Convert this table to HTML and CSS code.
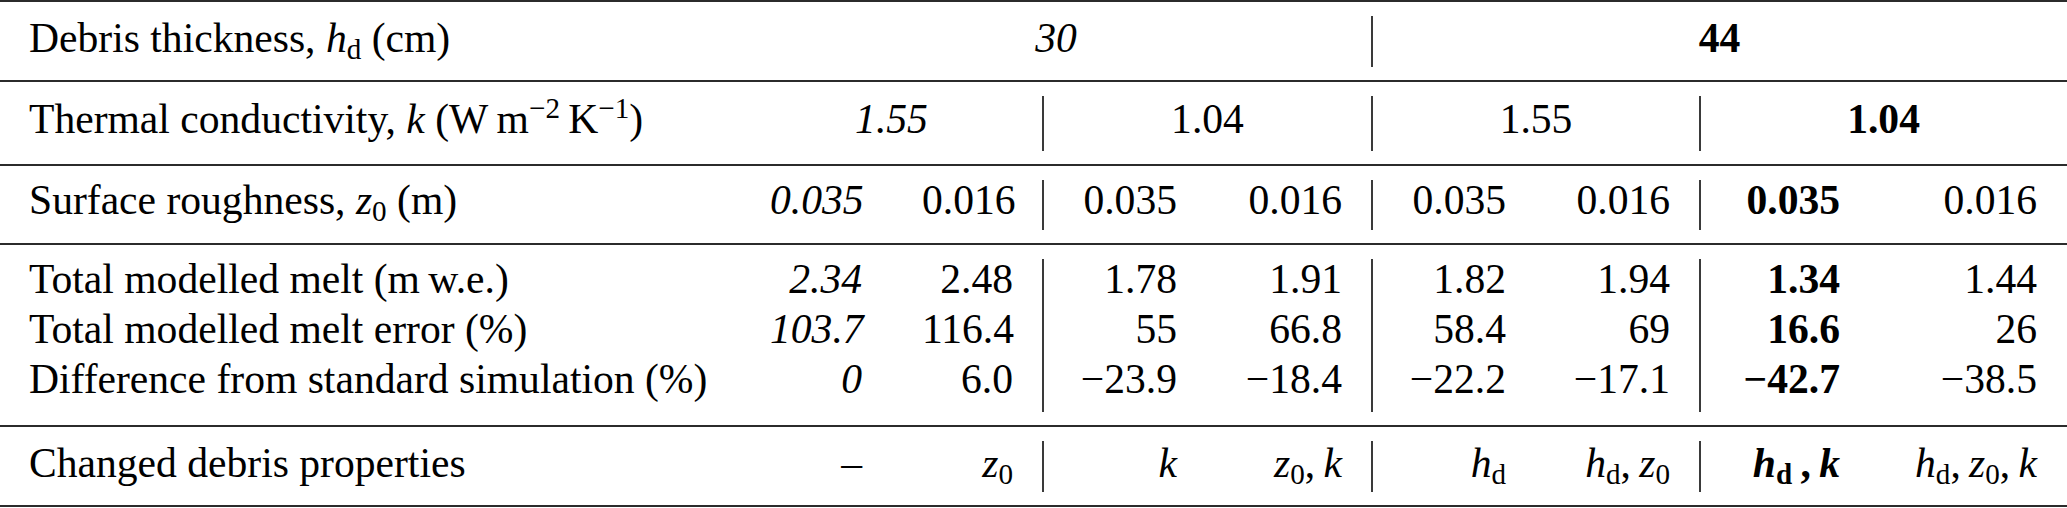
FILE: index.html
```html
<!DOCTYPE html>
<html>
<head>
    <link rel="stylesheet" href="styles.css">
</head>
<body>
    <table class="props">
        <colgroup>
            <col class="c-label">
            <col class="c-1a"><col class="c-1b">
            <col class="c-2a"><col class="c-2b">
            <col class="c-3a"><col class="c-3b">
            <col class="c-4a"><col class="c-4b">
        </colgroup>
        <tr class="ruled r1">
            <td class="lbl">Debris thickness, <i>h</i><sub>d</sub> (cm)</td>
            <td class="mid" colspan="4"><i>30</i></td>
            <td class="mid sep" colspan="4"><b>44</b></td>
        </tr>
        <tr class="ruled r2">
            <td class="lbl">Thermal conductivity, <i>k</i> (W&thinsp;m<sup>&minus;2</sup>&thinsp;K<sup>&minus;1</sup>)</td>
            <td class="mid" colspan="2"><i>1.55</i></td>
            <td class="mid sep" colspan="2">1.04</td>
            <td class="mid sep" colspan="2">1.55</td>
            <td class="mid sep" colspan="2"><b>1.04</b></td>
        </tr>
        <tr class="ruled r3">
            <td class="lbl">Surface roughness, <i>z</i><sub>0</sub> (m)</td>
            <td><i>0.035</i></td>
            <td>0.016</td>
            <td class="sep">0.035</td>
            <td>0.016</td>
            <td class="sep">0.035</td>
            <td>0.016</td>
            <td class="sep"><b>0.035</b></td>
            <td>0.016</td>
        </tr>
        <tr class="ruled g1">
            <td class="lbl">Total modelled melt (m&thinsp;w.e.)</td>
            <td><i>2.34</i></td>
            <td>2.48</td>
            <td class="sep">1.78</td>
            <td>1.91</td>
            <td class="sep">1.82</td>
            <td>1.94</td>
            <td class="sep"><b>1.34</b></td>
            <td>1.44</td>
        </tr>
        <tr class="g2">
            <td class="lbl">Total modelled melt error (%)</td>
            <td><i>103.7</i></td>
            <td>116.4</td>
            <td class="sep">55</td>
            <td>66.8</td>
            <td class="sep">58.4</td>
            <td>69</td>
            <td class="sep"><b>16.6</b></td>
            <td>26</td>
        </tr>
        <tr class="g3">
            <td class="lbl">Difference from standard simulation (%)</td>
            <td><i>0</i></td>
            <td>6.0</td>
            <td class="sep">&minus;23.9</td>
            <td>&minus;18.4</td>
            <td class="sep">&minus;22.2</td>
            <td>&minus;17.1</td>
            <td class="sep"><b>&minus;42.7</b></td>
            <td>&minus;38.5</td>
        </tr>
        <tr class="ruled r7">
            <td class="lbl">Changed debris properties</td>
            <td>&ndash;</td>
            <td><i>z</i><sub>0</sub></td>
            <td class="sep"><i>k</i></td>
            <td><i>z</i><sub>0</sub>,&thinsp;<i>k</i></td>
            <td class="sep"><i>h</i><sub>d</sub></td>
            <td><i>h</i><sub>d</sub>,&thinsp;<i>z</i><sub>0</sub></td>
            <td class="sep"><b><i>h</i><sub>d</sub>&thinsp;,&thinsp;<i>k</i></b></td>
            <td><i>h</i><sub>d</sub>,&thinsp;<i>z</i><sub>0</sub>,&thinsp;<i>k</i></td>
        </tr>
    </table>
</body>
</html>
```

FILE: styles.css
```css
body {
    margin: 0;
    overflow: hidden;
    background: #fff;
    color: #000;
    font-family: "Liberation Serif", "Times New Roman", serif;
    font-size: 41.6px;
}
.props {
    width: 2067px;
    table-layout: fixed;
    border-collapse: separate;
    border-spacing: 0;
    border-bottom: 2px solid #2b2b2b;
}
.c-label { width: 740px; }
.c-1a { width: 152px; }
.c-1b { width: 151px; }
.c-2a { width: 164px; }
.c-2b { width: 165px; }
.c-3a { width: 164px; }
.c-3b { width: 164px; }
.c-4a { width: 170px; }
.c-4b { width: 197px; }

td {
    position: relative;
    padding: 10px 30px 18px;
    line-height: 50px;
    text-align: right;
    white-space: nowrap;
}
td.lbl {
    text-align: left;
    padding-left: 29px;
}
td.mid {
    text-align: center;
}
.ruled td {
    border-top: 2px solid #2b2b2b;
}

/* row spacing */
.r1 td { padding-top: 11px; padding-bottom: 17px; }
.r2 td { padding-top: 12px; padding-bottom: 20px; }
.r3 td { padding-top: 9px; padding-bottom: 18px; }
.g1 td { padding-top: 9px; padding-bottom: 0; }
.g2 td { padding-top: 0; padding-bottom: 0; }
.g3 td { padding-top: 0; padding-bottom: 21px; }
.r7 td { padding-top: 11px; padding-bottom: 17px; }

/* vertical rules stop short of the horizontal ones */
.sep::before {
    content: "";
    position: absolute;
    left: -1px;
    top: 14px;
    bottom: 13px;
    width: 2px;
    background: #3a3a3a;
}
.g1 .sep::before { bottom: 0; }
.g2 .sep::before { top: 0; bottom: 0; }
.g3 .sep::before { top: 0; }

sub, sup {
    font-size: 0.7em;
    line-height: 0;
    position: relative;
    vertical-align: baseline;
}
sub { top: 0.25em; }
sup { top: -0.5em; }
b { font-weight: bold; }
```
